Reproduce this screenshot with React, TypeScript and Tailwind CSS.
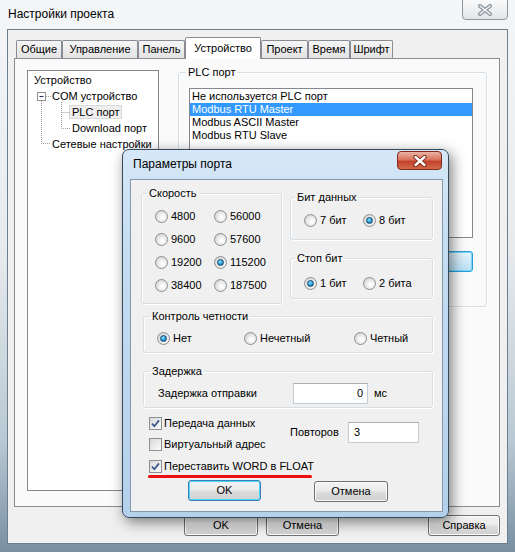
import React from 'react';

const font = "font-['Liberation_Sans',Arial,sans-serif]";

function Radio({ label, checked }: { label: string; checked?: boolean }) {
  return (
    <div className="flex items-center gap-[3px]">
      <span className="flex h-[13px] w-[13px] items-center justify-center rounded-full border border-[#8e8f8f] bg-[radial-gradient(circle_at_60%_60%,#ffffff_10%,#e4e4e4_55%,#c4c4c4_100%)]">
        {checked && (
          <span className="h-[7px] w-[7px] rounded-full border border-[#174a72] bg-[radial-gradient(circle_at_40%_35%,#a5e9ff_0%,#2aa6de_45%,#0b5a8e_100%)]" />
        )}
      </span>
      <span>{label}</span>
    </div>
  );
}

function Check({ label, checked }: { label: string; checked?: boolean }) {
  return (
    <div className="flex items-center gap-[2px]">
      <span className="flex h-[13px] w-[13px] items-center justify-center border border-[#8e8f8f] bg-gradient-to-br from-[#d8d8d8] to-[#fbfbfb]">
        {checked && (
          <svg width="9" height="9" viewBox="0 0 9 9">
            <path d="M1 4.6 L3.4 7.2 L8 1.4" fill="none" stroke="#3d5a8c" strokeWidth="1.8" />
          </svg>
        )}
      </span>
      <span>{label}</span>
    </div>
  );
}

function Group({
  title,
  className = '',
  legend = 'ml-[6px]',
  children,
}: {
  title: string;
  className?: string;
  legend?: string;
  children: React.ReactNode;
}) {
  return (
    <fieldset className={`rounded-[3px] border border-[#d5dfe5] shadow-[inset_1px_1px_0_#ffffff,1px_1px_0_#ffffff] ${className}`}>
      <legend className={`px-[2px] leading-[13px] ${legend}`}>{title}</legend>
      {children}
    </fieldset>
  );
}

function WinButton({ label, className = '', focused }: { label: string; className?: string; focused?: boolean }) {
  return (
    <div
      className={`flex h-[21px] items-center justify-center rounded-[3px] border ${
        focused
          ? 'border-[#3c7fb1] shadow-[inset_0_0_0_1px_#48d7fb]'
          : 'border-[#707070] shadow-[inset_0_0_0_1px_#fcfcfc]'
      } bg-[linear-gradient(180deg,#f2f2f2_0%,#ebebeb_48%,#dddddd_52%,#cfcfcf_100%)] ${className}`}
    >
      {label}
    </div>
  );
}

const tabs = [
  { t: 'Общие', w: 'w-[46px]' },
  { t: 'Управление', w: 'w-[76px]' },
  { t: 'Панель', w: 'w-[47px]' },
  { t: 'Устройство', w: 'w-[76px]', on: true },
  { t: 'Проект', w: 'w-[47px]' },
  { t: 'Время', w: 'w-[42px]' },
  { t: 'Шрифт', w: 'w-[43px]' },
];

const ports = ['Не используется PLC порт', 'Modbus RTU Master', 'Modbus ASCII Master', 'Modbus RTU Slave'];

export default function App() {
  return (
    <div
      className={`relative h-[552px] w-[515px] overflow-hidden bg-[linear-gradient(180deg,#f4f6f8_0%,#e7ebee_45%,#b9c8d3_80%,#7890a2_100%)] text-[11px] leading-[13px] text-black ${font}`}
    >
      {/* title bar */}
      <div className="flex h-[29px] items-start">
        <span className="pl-[8px] pt-[7px] text-[12px] leading-[15px]">Настройки проекта</span>
        <div className="ml-auto mr-[7px] -mt-[2px] flex h-[22px] w-[46px] items-center justify-center rounded-b-[4px] border border-[#8d959e] bg-gradient-to-b from-[#fbfbfb] to-[#e2e6ea]">
          <svg width="16" height="12" viewBox="0 0 16 12" className="mt-[2px]">
            <path d="M3 2 L13 10 M13 2 L3 10" stroke="#8a939c" strokeWidth="4" strokeLinecap="round" />
            <path d="M3 2 L13 10 M13 2 L3 10" stroke="#f7f7f7" strokeWidth="1.6" strokeLinecap="round" />
          </svg>
        </div>
      </div>

      {/* client area */}
      <div className="mx-[7px] h-[515px] border border-[#6d7f8e] bg-[#f0f0f0]">
        <div className="pl-[6px] pt-[7px]">
          <div className="flex h-[21px] items-end pl-[2px]">
            {tabs.map((tab) =>
              tab.on ? (
                <div
                  key={tab.t}
                  className={`relative z-10 -mb-px flex h-[22px] justify-center rounded-t-[2px] border-x border-t border-[#898c95] bg-white pt-[4px] ${tab.w}`}
                >
                  {tab.t}
                </div>
              ) : (
                <div
                  key={tab.t}
                  className={`flex h-[18px] items-center justify-center rounded-t-[2px] border-x border-t border-[#898c95] bg-gradient-to-b from-[#f5f5f5] to-[#e3e3e3] ${tab.w}`}
                >
                  {tab.t}
                </div>
              )
            )}
          </div>

          <div className="h-[449px] w-[486px] border border-[#898c95] bg-[#fafafa]">
            <div className="flex items-start pl-[12px] pt-[7px]">
              {/* tree */}
              <div className="relative mt-[4px] h-[421px] w-[132px] border border-[#828790] bg-white pt-[1px]">
                <svg className="absolute left-0 top-0" width="60" height="80" viewBox="0 0 60 80">
                  <g stroke="#9a9a9a" strokeWidth="1" strokeDasharray="1 1">
                    <path d="M13.5 30 V72.5 H22" fill="none" />
                    <path d="M18 25.5 H23" fill="none" />
                    <path d="M33.5 31 V57.5 H42 M33.5 41.5 H42" fill="none" />
                  </g>
                  <rect x="9.5" y="21.5" width="8" height="8" fill="#ffffff" stroke="#919191" />
                  <path d="M11.5 25.5 H15.5" stroke="#1f2f6b" />
                </svg>
                <div className="flex h-[16px] items-center pl-[6px]">Устройство</div>
                <div className="flex h-[16px] items-center pl-[24px]">COM устройство</div>
                <div className="flex h-[16px] items-center pl-[41px]">
                  <span className="border border-[#dadada] bg-[#efefef] px-[2px] leading-[12px]">PLC порт</span>
                </div>
                <div className="flex h-[16px] items-center pl-[44px]">Download порт</div>
                <div className="flex h-[16px] items-center pl-[24px]">Сетевые настройки</div>
              </div>

              {/* PLC port group */}
              <Group title="PLC порт" className="ml-[19px] w-[309px] pb-[34px]" legend="ml-[7px]">
                <div className="ml-[10px] mt-[9px] h-[150px] w-[284px] border border-[#828790] bg-white pt-px">
                  {ports.map((p, i) => (
                    <div key={p} className={`h-[13px] pl-[2px] ${i === 1 ? 'bg-[#3399ff] text-white' : ''}`}>
                      {p}
                    </div>
                  ))}
                </div>
                <div className="ml-[219px] mt-[13px] h-[21px] w-[75px] rounded-[3px] border border-[#26a0da] bg-gradient-to-b from-[#e5f4fc] to-[#b8e0f5] shadow-[inset_0_0_0_1px_#7fd3f7]" />
              </Group>
            </div>
          </div>

          <div className="mt-[8px] flex pl-[170px] pr-[7px]">
            <WinButton label="OK" className="w-[74px]" />
            <WinButton label="Отмена" className="ml-[8px] w-[73px]" />
            <WinButton label="Справка" className="ml-auto w-[72px]" />
          </div>
        </div>
      </div>

      {/* dialog */}
      <div className="absolute left-[122px] top-[149px] flex h-[369px] w-[327px] flex-col rounded-[7px] border border-[#34495e] bg-[linear-gradient(180deg,#d6e8f7_0%,#c6ddf2_25%,#b4d0eb_100%)] pb-[5px] pl-[7px] pr-[5px] shadow-[3px_4px_14px_rgba(0,0,0,0.5)]">
        <div className="flex h-[29px] items-start">
          <span className="pl-[3px] pt-[7px] text-[12px] leading-[15px]">Параметры порта</span>
          <div className="ml-auto mr-[1px] mt-[1px] flex h-[19px] w-[45px] items-center justify-center rounded-[4px] border border-[#7f2a1c] bg-[linear-gradient(180deg,#eab3a6_0%,#d9735c_45%,#c3432a_55%,#d36a4a_100%)]">
            <svg width="16" height="12" viewBox="0 0 16 12">
              <path d="M3.5 2 L12.5 10 M12.5 2 L3.5 10" stroke="#6d1f12" strokeWidth="4.2" strokeLinecap="round" />
              <path d="M3.5 2 L12.5 10 M12.5 2 L3.5 10" stroke="#ffffff" strokeWidth="2.4" strokeLinecap="round" />
            </svg>
          </div>
        </div>

        <div className="flex flex-1 flex-col border border-[#8499ad] bg-[#f0f0f0]">
          <div className="flex pl-[10px] pt-[7px]">
            <Group title="Скорость" className="w-[141px] pb-[6px]" legend="ml-[5px]">
              <div className="grid auto-rows-[23px] grid-cols-[59px_1fr] items-center pl-[13px] pt-[5px]">
                <Radio label="4800" />
                <Radio label="56000" />
                <Radio label="9600" />
                <Radio label="57600" />
                <Radio label="19200" />
                <Radio label="115200" checked />
                <Radio label="38400" />
                <Radio label="187500" />
              </div>
            </Group>
            <div className="ml-[8px] flex w-[143px] flex-col pt-[4px]">
              <Group title="Бит данных" className="pb-[7px]" legend="ml-[4px]">
                <div className="grid h-[23px] grid-cols-[59px_1fr] items-center pl-[13px] pt-[5px] box-content">
                  <Radio label="7 бит" />
                  <Radio label="8 бит" checked />
                </div>
              </Group>
              <Group title="Стоп бит" className="mt-[12px] pb-[3px]" legend="ml-[4px]">
                <div className="box-content grid h-[23px] grid-cols-[59px_1fr] items-center pl-[13px] pt-[7px]">
                  <Radio label="1 бит" checked />
                  <Radio label="2 бита" />
                </div>
              </Group>
            </div>
          </div>

          <Group title="Контроль четности" className="ml-[12px] mt-[6px] w-[290px] pb-[2px]" legend="ml-[6px]">
            <div className="box-content grid h-[23px] grid-cols-[87px_110px_1fr] items-center pl-[13px] pt-[4px]">
              <Radio label="Нет" checked />
              <Radio label="Нечетный" />
              <Radio label="Четный" />
            </div>
          </Group>

          <Group title="Задержка" className="ml-[12px] mt-[12px] w-[290px] pb-[3px]" legend="ml-[6px]">
            <div className="flex h-[21px] items-center pl-[14px] mt-[5px]">
              <span className="w-[135px]">Задержка отправки</span>
              <div className="flex h-[21px] w-[75px] items-center justify-end border border-[#c5cbd2] border-t-[#abadb3] bg-white pr-[4px]">
                0
              </div>
              <span className="ml-[6px]">мс</span>
            </div>
          </Group>

          <div className="ml-[18px] mt-[5px] flex">
            <div className="w-[141px]">
              <div className="flex h-[21px] items-center">
                <Check label="Передача данных" checked />
              </div>
              <div className="flex h-[21px] items-center">
                <Check label="Виртуальный адрес" />
              </div>
            </div>
            <div className="flex items-center pt-[9px] self-start">
              <span className="w-[58px]">Повторов</span>
              <div className="flex h-[21px] w-[71px] items-center border border-[#c5cbd2] border-t-[#abadb3] bg-white pl-[5px]">
                3
              </div>
            </div>
          </div>
          <div className="ml-[18px] flex h-[22px] items-center whitespace-nowrap">
            <Check label="Переставить WORD в FLOAT" checked />
          </div>
          <div className="-mt-[2px] ml-[17px] h-[3px] w-[164px] rounded-full bg-[#ec1010]" />

          <div className="ml-[57px] mt-[2px] flex items-start">
            <WinButton label="OK" className="w-[73px]" focused />
            <WinButton label="Отмена" className="ml-[53px] mt-px w-[74px]" />
          </div>
        </div>
      </div>
    </div>
  );
}
